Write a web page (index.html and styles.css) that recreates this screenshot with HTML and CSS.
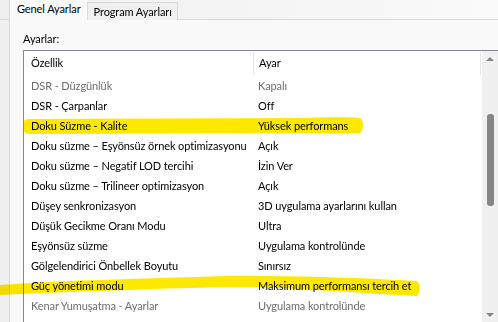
FILE: index.html
```html
<!DOCTYPE html>
<html lang="tr">
<head>
    <meta charset="UTF-8">
    <title>Genel Ayarlar</title>
    <link rel="stylesheet" href="styles.css">
</head>
<body>
    <div class="tabs">
        <div class="tab active">Genel Ayarlar</div>
        <div class="tab">Program Ayarları</div>
    </div>

    <div class="panel">
        <div class="panel-label">Ayarlar:</div>
        <div class="listbox">
            <div class="list">
                <div class="row header">
                    <div class="cell name">Özellik</div>
                    <div class="cell value">Ayar</div>
                    <div class="cell rest"></div>
                </div>
                <div class="row muted">
                    <div class="cell name">DSR - Düzgünlük</div>
                    <div class="cell value">Kapalı</div>
                </div>
                <div class="row">
                    <div class="cell name">DSR - Çarpanlar</div>
                    <div class="cell value">Off</div>
                </div>
                <div class="row">
                    <div class="cell name">Doku Süzme - Kalite</div>
                    <div class="cell value">Yüksek performans</div>
                </div>
                <div class="row">
                    <div class="cell name">Doku süzme – Eşyönsüz örnek optimizasyonu</div>
                    <div class="cell value">Açık</div>
                </div>
                <div class="row">
                    <div class="cell name">Doku süzme – Negatif LOD tercihi</div>
                    <div class="cell value">İzin Ver</div>
                </div>
                <div class="row">
                    <div class="cell name">Doku süzme – Trilineer optimizasyon</div>
                    <div class="cell value">Açık</div>
                </div>
                <div class="row">
                    <div class="cell name">Düşey senkronizasyon</div>
                    <div class="cell value">3D uygulama ayarlarını kullan</div>
                </div>
                <div class="row">
                    <div class="cell name">Düşük Gecikme Oranı Modu</div>
                    <div class="cell value">Ultra</div>
                </div>
                <div class="row">
                    <div class="cell name">Eşyönsüz süzme</div>
                    <div class="cell value">Uygulama kontrolünde</div>
                </div>
                <div class="row">
                    <div class="cell name">Gölgelendirici Önbellek Boyutu</div>
                    <div class="cell value">Sınırsız</div>
                </div>
                <div class="row">
                    <div class="cell name">Güç yönetimi modu</div>
                    <div class="cell value">Maksimum performansı tercih et</div>
                </div>
                <div class="row muted">
                    <div class="cell name">Kenar Yumuşatma - Ayarlar</div>
                    <div class="cell value">Uygulama kontrolünde</div>
                </div>
            </div>
            <div class="scrollbar">
                <div class="arrow up"></div>
                <div class="track">
                    <div class="thumb"></div>
                </div>
                <div class="arrow down"></div>
            </div>
        </div>
    </div>

    <!-- highlighter strokes drawn over the list -->
    <svg class="marker" width="498" height="322" viewBox="0 0 498 322">
        <path d="M24,122 C24,119 27,119 32,119 L300,118 C330,117 352,117 360,118 C364,119 364,132 360,133 C340,134 310,133 280,133 L32,134 C26,134 24,133 24,130 Z"/>
        <path d="M0,285 C40,282 90,280 130,279 C170,278 210,276 245,276 C300,276 370,278 416,281 C421,282 421,295 416,296 C370,294 300,288 245,287 C200,287 160,289 130,290 C90,291 40,293 0,295 Z"/>
    </svg>
</body>
</html>
```

FILE: styles.css
```css
body {
    margin: 0;
    width: 498px;
    height: 322px;
    overflow: hidden;
    background-color: #f0f0f0;
    font-family: Lato, "Open Sans", sans-serif;
    font-size: 11px;
    letter-spacing: -0.1px;
    color: #000;
}

.tabs {
    display: flex;
    align-items: flex-end;
    height: 19px;
    padding-left: 9px;
    border-bottom: 1px solid #d9d9d9;
    background: linear-gradient(to right, #efefef, #fafafa);
}

.tab {
    height: 17px;
    line-height: 18px;
    padding: 0 5px 0 6px;
    background-color: #f0f0f0;
    border: 1px solid #d9d9d9;
    border-bottom: none;
    margin-bottom: -1px;
}

.tab.active {
    height: 20px;
    line-height: 17px;
    padding: 0 6px 0 7px;
    background-color: #f9f9f9;
    border-top: none;
    border-right: none;
    z-index: 1;
}

.panel {
    margin-left: 9px;
    height: 302px;
    padding: 11px 0 0 13px;
    box-sizing: border-box;
    background-color: #f9f9f9;
    border-left: 1px solid #d9d9d9;
}

.panel-label {
    height: 19px;
    line-height: 16px;
}

.listbox {
    display: flex;
    height: 280px;
    background-color: #fff;
    border-top: 1px solid #828790;
    border-left: 1px solid #828790;
}

.list {
    flex: 1;
    overflow: hidden;
}

.row {
    display: flex;
    height: 20px;
    line-height: 20px;
}

.row.header {
    height: 25px;
    line-height: 23px;
}

.row.muted {
    color: #6d6d6d;
}

.cell {
    white-space: nowrap;
    overflow: hidden;
}

.name {
    width: 221px;
    padding-left: 7px;
}

.value {
    width: 222px;
    padding-left: 6px;
}

.header .name {
    width: 222px;
    padding-left: 7px;
}

.header .value {
    width: 221px;
    padding-left: 5px;
    border-left: 1px solid #e5e5e5;
    margin: 1px 0 1px;
    line-height: 21px;
}

.header .rest {
    flex: 1;
    border-left: 1px solid #e5e5e5;
    margin: 1px 0 1px;
}

.scrollbar {
    display: flex;
    flex-direction: column;
    width: 16px;
    height: 272px;
    background-color: #f0f0f0;
}

.arrow {
    height: 16px;
    display: flex;
    justify-content: center;
    align-items: center;
}

.arrow::after {
    content: "";
    border-left: 4px solid transparent;
    border-right: 4px solid transparent;
}

.arrow.up::after {
    border-bottom: 4px solid #858585;
}

.arrow.down::after {
    border-top: 4px solid #858585;
}

.track {
    flex: 1;
    padding-top: 47px;
}

.thumb {
    width: 7px;
    height: 92px;
    margin-left: 5px;
    border-radius: 3px;
    background-color: #858585;
}

.marker {
    position: absolute;
    top: 0;
    left: 0;
    mix-blend-mode: multiply;
    pointer-events: none;
}

.marker path {
    fill: #ffe800;
}
```
